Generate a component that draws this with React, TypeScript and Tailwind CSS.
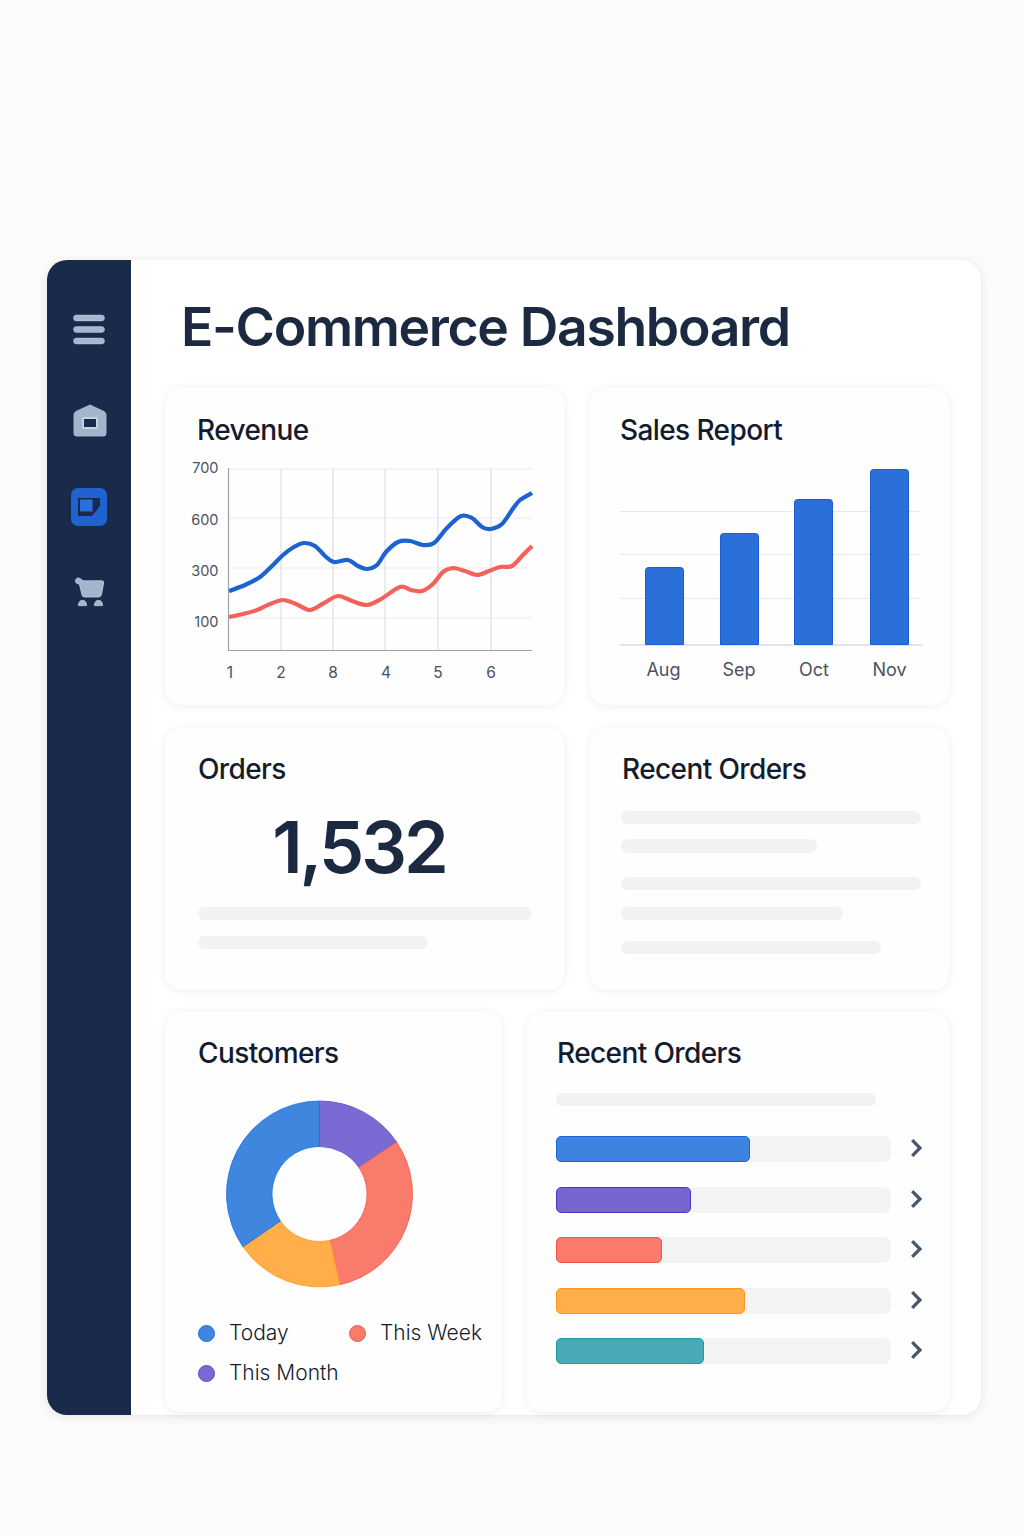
import React from 'react';

type Point = [number, number];

const bluePoints: Point[] = [
  [229, 591], [245, 585], [260, 577], [272, 566], [283, 555], [294, 547], [304, 543], [315, 546], [325, 556], [334, 562],
  [348, 560], [358, 566], [367, 569], [377, 565], [386, 552], [398, 542], [410, 541], [423, 545], [434, 543], [447, 528],
  [461, 516], [472, 518], [482, 527], [491, 529], [502, 524], [512, 510], [520, 500], [532, 493],
];

const redPoints: Point[] = [
  [229, 617], [243, 614], [257, 610], [270, 604], [283, 600], [296, 604], [310, 610], [324, 603], [338, 596], [352, 601],
  [367, 605], [381, 599], [400, 587], [411, 590], [422, 591], [433, 584], [443, 572], [453, 568], [465, 571], [477, 575],
  [489, 571], [500, 567], [512, 566], [522, 556], [532, 546],
];

// catmull-rom through the points, gives the soft wave of the chart lines
function smoothPath(points: Point[]) {
  let d = `M${points[0][0]} ${points[0][1]}`;
  for (let i = 0; i < points.length - 1; i++) {
    const p0 = points[Math.max(i - 1, 0)];
    const p1 = points[i];
    const p2 = points[i + 1];
    const p3 = points[Math.min(i + 2, points.length - 1)];
    const c1x = p1[0] + (p2[0] - p0[0]) / 6;
    const c1y = p1[1] + (p2[1] - p0[1]) / 6;
    const c2x = p2[0] - (p3[0] - p1[0]) / 6;
    const c2y = p2[1] - (p3[1] - p1[1]) / 6;
    d += ` C${c1x} ${c1y} ${c2x} ${c2y} ${p2[0]} ${p2[1]}`;
  }
  return d;
}

function donutSlice(from: number, to: number, cx: number, cy: number, outer: number, inner: number) {
  const pt = (r: number, a: number) => {
    const rad = (a * Math.PI) / 180;
    return `${cx + r * Math.sin(rad)} ${cy - r * Math.cos(rad)}`;
  };
  const large = to - from > 180 ? 1 : 0;
  return `M${pt(outer, from)} A${outer} ${outer} 0 ${large} 1 ${pt(outer, to)} L${pt(inner, to)} A${inner} ${inner} 0 ${large} 0 ${pt(inner, from)} Z`;
}

const Card: React.FC<{ className?: string; children: React.ReactNode }> = ({ className, children }) => (
  <div className={`rounded-[16px] bg-[#fefefe] shadow-[0_1px_8px_rgba(30,41,59,0.08)] ${className ?? ''}`}>{children}</div>
);

const Skeleton: React.FC<{ className: string }> = ({ className }) => (
  <div className={`rounded-full bg-[#f2f2f2] ${className}`} />
);

const CardTitle: React.FC<{ children: React.ReactNode; className?: string }> = ({ children, className }) => (
  <h2 className={`pt-px text-[28px] leading-[34px] font-medium tracking-[-0.6px] text-[#131c2e] ${className ?? ''}`}>{children}</h2>
);

const Sidebar = () => (
  <aside className="flex w-[84px] shrink-0 flex-col items-center rounded-l-[20px] bg-[#1a2a4b] pt-[54px]">
    <svg width="34" height="31" viewBox="0 0 34 31" className="block">
      <g fill="#a6b8cf" stroke="#dbe4ee" strokeOpacity="0.35" strokeWidth="1">
        <rect x="1.5" y="1" width="31" height="6" rx="3" />
        <rect x="1.5" y="12.5" width="31" height="6" rx="3" />
        <rect x="1.5" y="24" width="31" height="6" rx="3" />
      </g>
    </svg>
    <svg width="34" height="33" viewBox="0 0 34 33" className="mt-[59px] ml-px block">
      <path d="M17 0.5 L31 7 Q33.5 8.5 33.5 11 V29 Q33.5 32.5 30 32.5 H4 Q0.5 32.5 0.5 29 V11 Q0.5 8.5 3 7 Z" fill="#a3b5cc" />
      <rect x="10" y="14" width="14" height="10" rx="0.5" fill="#1a2a4b" stroke="#c5d2e0" strokeWidth="2" />
    </svg>
    <div className="mt-[51px] flex h-[38px] w-[36px] items-center justify-center rounded-[7px] bg-[#1f62d0]">
      <svg width="22" height="18" viewBox="0 0 22 18" className="block">
        <path d="M0 0 H22 V8 L14 18 H0 Z" fill="#1a2a4b" />
        <rect x="2" y="1.5" width="12.5" height="12" fill="#2a6fdc" />
      </svg>
    </div>
    <svg width="32" height="30" viewBox="0 0 32 30" className="mt-[51px] block">
      <g fill="#a3b5cc" stroke="#c5d2e0" strokeWidth="0.8">
        <path d="M2.5 3.5 A3 3 0 0 1 7 1.5 L10 3.8 H29 Q31 3.8 30.6 6 L28.5 17.5 Q28 20 25.5 20 H11.5 Q9.5 20 9 18 L6.3 6.8 A3 3 0 0 1 2.5 3.5 Z" />
        <path d="M5.5 28.6 Q5.5 23.4 9.5 23.4 Q13.5 23.4 13.5 28.6 Z" />
        <path d="M21.5 28.6 Q21.5 23.4 25.5 23.4 Q29.5 23.4 29.5 28.6 Z" />
      </g>
    </svg>
  </aside>
);

const RevenueChart = () => {
  const rows: [string, number, number][] = [['700', 469, 473], ['600', 518, 524.5], ['300', 568, 576], ['100', 618, 626.5]];
  const cols = [281, 333, 385, 438, 491];
  const ticks: [string, number][] = [['1', 230], ['2', 281], ['8', 333], ['4', 386], ['5', 438], ['6', 491]];
  return (
    <svg width="390" height="240" viewBox="170 450 390 240" className="block">
      {rows.map(([, y]) => (
        <line key={y} x1="229" x2="532" y1={y} y2={y} stroke="#e8e9ec" strokeWidth="1.2" />
      ))}
      {cols.map((x) => (
        <line key={x} x1={x} x2={x} y1="469" y2="651" stroke="#d6d8dd" strokeWidth="1" />
      ))}
      <line x1="228.5" x2="228.5" y1="468" y2="651" stroke="#9ca1aa" strokeWidth="1.2" />
      <line x1="228" x2="532" y1="650.5" y2="650.5" stroke="#9ca1aa" strokeWidth="1.2" />
      <path d={smoothPath(redPoints)} fill="none" stroke="#f4615a" strokeWidth="4.2" />
      <path d={smoothPath(bluePoints)} fill="none" stroke="#1c63d0" strokeWidth="4.2" />
      <g fontSize="14.5" fill="#4a5160">
        {rows.map(([label, y, baseline]) => (
          <text key={y} x="218.5" y={baseline} textAnchor="end">{label}</text>
        ))}
        {ticks.map(([label, x]) => (
          <text key={x} x={x} y="677.5" fontSize="15.5" textAnchor="middle">{label}</text>
        ))}
      </g>
    </svg>
  );
};

const SalesChart = () => {
  const bars: [string, number, number, number][] = [
    ['Aug', 645.5, 567.5, 663.5],
    ['Sep', 720.5, 533.5, 739],
    ['Oct', 794.5, 499.5, 814],
    ['Nov', 870.5, 469.5, 889.5],
  ];
  return (
    <svg width="340" height="240" viewBox="610 450 340 240" className="block">
      {[511.5, 554.5, 598.5].map((y) => (
        <line key={y} x1="620" x2="919" y1={y} y2={y} stroke="#e8e9ec" strokeWidth="1" />
      ))}
      <line x1="620" x2="923" y1="645" y2="645" stroke="#c9cbd0" strokeWidth="1.2" />
      {bars.map(([label, x, top, center]) => (
        <g key={label}>
          <path
            d={`M${x} 644.5 V${top + 3} Q${x} ${top} ${x + 3} ${top} H${x + 35} Q${x + 38} ${top} ${x + 38} ${top + 3} V644.5 Z`}
            fill="#2a70d8"
            stroke="#1b5cd2"
            strokeWidth="1"
          />
          <text x={center} y="676" fontSize="18" fill="#4b5260" textAnchor="middle">{label}</text>
        </g>
      ))}
    </svg>
  );
};

const Donut = () => {
  const slices: [number, number, string, string][] = [
    [0, 56, '#7a6ad3', '#5a49c8'],
    [56, 167.3, '#f97b6c', '#f4584c'],
    [167.3, 235.4, '#ffae4a', '#ff9d22'],
    [235.4, 360, '#3f86df', '#1f6fe0'],
  ];
  return (
    <svg width="190" height="190" viewBox="225 1098 190 190" className="block">
      {slices.map(([from, to, fill, stroke]) => (
        <path key={from} d={donutSlice(from, to, 319.5, 1193, 93, 47.5)} fill={fill} stroke={stroke} strokeWidth="0.8" />
      ))}
    </svg>
  );
};

const LegendItem: React.FC<{ label: string; dot: string }> = ({ label, dot }) => (
  <div className="flex items-center gap-[14px]">
    <span className={`h-[17px] w-[17px] rounded-full border ${dot}`} />
    <span className="text-[21px] leading-[28px] font-light text-[#141c2b]">{label}</span>
  </div>
);

const ProgressRow: React.FC<{ width: string; fill: string }> = ({ width, fill }) => (
  <div className="flex items-center gap-[20px]">
    <div className="h-[26px] w-[335px] rounded-[8px] bg-[#f3f3f3]">
      <div className={`h-full rounded-[5px] border ${width} ${fill}`} />
    </div>
    <svg width="11" height="18" viewBox="0 0 11 18" className="-mt-[2px] block">
      <path d="M1.2 1.2 L9 9 L1.2 16.8" fill="none" stroke="#475569" strokeWidth="3.2" />
    </svg>
  </div>
);

export default function App() {
  return (
    <div className="h-[1536px] overflow-hidden bg-[#fdfbf9] pt-[260px] pl-[47px] font-['Inter',sans-serif]">
      <div className="flex h-[1155px] w-[934px] rounded-[20px] bg-white shadow-[0_2px_10px_rgba(30,41,59,0.1)]">
        <Sidebar />
        <main className="flex-1 pl-[34px]">
          <h1 className="pt-[32px] pl-[16px] text-[53.5px] leading-[70px] font-semibold tracking-[-1.35px] text-[#1b2a41]">
            E-Commerce Dashboard
          </h1>

          <div className="mt-[26px] grid grid-cols-[399px_359px] gap-[26px]">
            <Card className="h-[317px] pt-[24px] pl-[32px]">
              <CardTitle>Revenue</CardTitle>
              <div className="mt-[3px] -ml-[27px]"><RevenueChart /></div>
            </Card>
            <Card className="h-[317px] pt-[24px] pl-[30px]">
              <CardTitle>Sales Report</CardTitle>
              <div className="mt-[3px] -ml-[10px]"><SalesChart /></div>
            </Card>
          </div>

          <div className="mt-[23px] grid grid-cols-[399px_359px] gap-[26px]">
            <Card className="h-[262px] pt-[23px] pl-[33px]">
              <CardTitle>Orders</CardTitle>
              <div className="mt-[16px] pr-[44px] text-center text-[72px] leading-[90px] font-semibold tracking-[-3px] text-[#1b2a41]">
                1,532
              </div>
              <Skeleton className="mt-[15px] h-[13px] w-[334px]" />
              <Skeleton className="mt-[16px] h-[13px] w-[230px]" />
            </Card>
            <Card className="h-[262px] pt-[23px] pl-[32px]">
              <CardTitle>Recent Orders</CardTitle>
              <div className="-ml-px">
                <Skeleton className="mt-[25px] h-[13px] w-[300px]" />
                <Skeleton className="mt-[15px] h-[14px] w-[196px]" />
                <Skeleton className="mt-[24px] h-[13px] w-[300px]" />
                <Skeleton className="mt-[17px] h-[13px] w-[222px]" />
                <Skeleton className="mt-[21px] h-[13px] w-[260px]" />
              </div>
            </Card>
          </div>

          <div className="mt-[22px] grid grid-cols-[337px_422px] gap-[25px]">
            <Card className="h-[400px] pt-[23px] pl-[33px]">
              <CardTitle>Customers</CardTitle>
              <div className="mt-[29px] ml-[27px]"><Donut /></div>
              <div className="mt-[30px] grid grid-cols-[151px_auto] gap-y-[12px]">
                <LegendItem label="Today" dot="border-[#1f6fe0] bg-[#3f86df]" />
                <LegendItem label="This Week" dot="border-[#f4584c] bg-[#f97b6c]" />
                <LegendItem label="This Month" dot="border-[#5a49c8] bg-[#7a6ad3]" />
              </div>
            </Card>
            <Card className="h-[400px] pt-[23px] pl-[30px]">
              <CardTitle>Recent Orders</CardTitle>
              <div className="-ml-px">
                <Skeleton className="mt-[23px] h-[13px] w-[320px]" />
                <div className="mt-[30px] flex flex-col gap-[24.6px]">
                  <ProgressRow width="w-[194px]" fill="border-[#1a66d8] bg-[#3c84e0]" />
                  <ProgressRow width="w-[135px]" fill="border-[#4a38c4] bg-[#7766d0]" />
                  <ProgressRow width="w-[106px]" fill="border-[#f4504a] bg-[#fa7a6c]" />
                  <ProgressRow width="w-[189px]" fill="border-[#ff9620] bg-[#ffae4a]" />
                  <ProgressRow width="w-[148px]" fill="border-[#1f9aa8] bg-[#4aa8b8]" />
                </div>
              </div>
            </Card>
          </div>
        </main>
      </div>
    </div>
  );
}
